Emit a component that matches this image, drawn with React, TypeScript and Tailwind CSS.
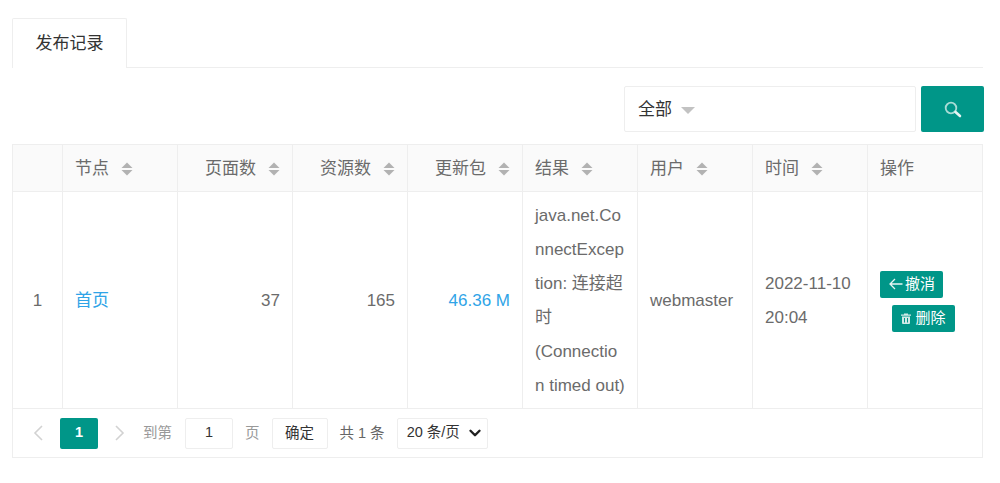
import React from 'react'
import { ChevronDown } from 'lucide-react'

const columns = [
  { name: '', width: 'w-[50px]', right: false, sort: false },
  { name: '节点', width: 'w-[115px]', right: false, sort: true },
  { name: '页面数', width: 'w-[115px]', right: true, sort: true },
  { name: '资源数', width: 'w-[115px]', right: true, sort: true },
  { name: '更新包', width: 'w-[115px]', right: true, sort: true },
  { name: '结果', width: 'w-[115px]', right: false, sort: true },
  { name: '用户', width: 'w-[115px]', right: false, sort: true },
  { name: '时间', width: 'w-[115px]', right: false, sort: true },
  { name: '操作', width: 'flex-1', right: false, sort: false },
]

const SortIcon: React.FC = () => (
  <svg width="12" height="14" viewBox="0 0 12 14" className="inline-block ml-[12px] shrink-0">
    <path d="M6 0.5 L11.5 6 L0.5 6 Z" fill="#b2b2b2" />
    <path d="M0.5 8 L11.5 8 L6 13.5 Z" fill="#b2b2b2" />
  </svg>
)

const Cell: React.FC<{ className?: string; children?: React.ReactNode }> = ({ className = '', children }) => (
  <div className={`border-r border-[#eeeeee] last:border-r-0 px-[12px] pt-[2px] flex items-center ${className}`}>
    {children}
  </div>
)

const App: React.FC = () => {
  return (
    <div className="w-[1000px] h-[483px] bg-white overflow-hidden pt-[18px] px-[12px] text-[17px] text-[#6b6b6b] font-['Liberation_Sans','Noto_Sans_CJK_SC',sans-serif]">
      <div className="w-[971px] h-[50px] border-b border-[#eeeeee]">
        <div className="w-[115px] h-[50px] bg-white border border-b-0 border-[#eeeeee] rounded-t-[2px] flex items-center justify-center text-[#333333]">
          发布记录
        </div>
      </div>

      <div className="w-[972px] mt-[18px] flex justify-end gap-[5px]">
        <div className="w-[292px] h-[46px] pt-[2px] border border-[#eeeeee] rounded-[2px] flex items-center pl-[13px] text-[#333333]">
          全部
          <svg width="14" height="7" viewBox="0 0 14 7" className="ml-[9px]">
            <path d="M0 0 L14 0 L7 7 Z" fill="#c2c2c2" />
          </svg>
        </div>
        <button className="w-[63px] h-[46px] bg-[#009688] rounded-[2px] flex items-center justify-center">
          <svg width="18" height="17" viewBox="0 0 18 17" fill="none">
            <circle cx="7" cy="7" r="5.3" stroke="#a8dcd6" strokeWidth="1.8" />
            <path d="M11.5 11 L16 15" stroke="#e6f5f3" strokeWidth="2.6" strokeLinecap="round" />
          </svg>
        </button>
      </div>

      <div className="w-[971px] mt-[12px] border border-[#eeeeee]">
        <div className="flex h-[47px] bg-[#fafafa] border-b border-[#eeeeee]">
          {columns.map((col) => (
            <Cell key={col.name || 'index'} className={`${col.width} ${col.right ? 'justify-end' : ''}`}>
              <span>{col.name}</span>
              {col.sort && <SortIcon />}
            </Cell>
          ))}
        </div>

        <div className="flex h-[217px] border-b border-[#eeeeee]">
          <Cell className="w-[50px] justify-center">1</Cell>
          <Cell className="w-[115px] text-[#2fa4e7]">首页</Cell>
          <Cell className="w-[115px] justify-end">37</Cell>
          <Cell className="w-[115px] justify-end">165</Cell>
          <Cell className="w-[115px] justify-end text-[#2fa4e7]">46.36 M</Cell>
          <Cell className="w-[115px]">
            <div className="leading-[34px] whitespace-nowrap">
              java.net.Co<br />
              nnectExcep<br />
              tion: 连接超<br />
              时<br />
              (Connectio<br />
              n timed out)
            </div>
          </Cell>
          <Cell className="w-[115px]">webmaster</Cell>
          <Cell className="w-[115px]">
            <div className="leading-[34px]">2022-11-10 20:04</div>
          </Cell>
          <Cell className="flex-1">
            <div className="flex flex-col gap-[7px]">
              <button className="w-[63px] h-[27px] bg-[#009688] rounded-[2px] text-white text-[15px] flex items-center justify-center gap-[2px]">
                <svg width="15" height="14" viewBox="0 0 15 14" fill="none" stroke="#e6f5f3" strokeWidth="1.3">
                  <path d="M7 2 L2 7 L7 12 M2 7 H14.5" />
                </svg>
                撤消
              </button>
              <button className="w-[63px] h-[27px] ml-[12px] bg-[#009688] rounded-[2px] text-white text-[15px] flex items-center justify-center gap-[4px]">
                <svg width="10" height="11" viewBox="0 0 10 11" fill="#cfeae7">
                  <path d="M0 1.5 H3 V0.5 H7 V1.5 H10 V2.8 H0 Z" />
                  <path d="M1 3.6 H9 V10 Q9 11 8 11 H2 Q1 11 1 10 Z M3 5 V9.5 H4 V5 Z M6 5 V9.5 H7 V5 Z" fillRule="evenodd" />
                </svg>
                删除
              </button>
            </div>
          </Cell>
        </div>

        <div className="h-[48px] flex items-center text-[14.5px]">
          <svg width="10" height="16" viewBox="0 0 10 16" fill="none" stroke="#d2d2d2" strokeWidth="1.6" className="ml-[20px]">
            <path d="M9 1 L2 8 L9 15" />
          </svg>
          <div className="ml-[17px] w-[38px] h-[31px] bg-[#009688] rounded-[2px] text-white font-bold flex items-center justify-center">1</div>
          <svg width="10" height="16" viewBox="0 0 10 16" fill="none" stroke="#d2d2d2" strokeWidth="1.6" className="ml-[17px]">
            <path d="M1 1 L8 8 L1 15" />
          </svg>
          <span className="ml-[18px] pt-[2px] text-[#999999]">到第</span>
          <div className="ml-[13px] w-[48px] h-[31px] border border-[#eeeeee] rounded-[2px] flex items-center justify-center text-[#333333]">1</div>
          <span className="ml-[12px] pt-[2px] text-[#999999]">页</span>
          <div className="ml-[12px] w-[56px] h-[31px] pt-[2px] border border-[#eeeeee] rounded-[2px] flex items-center justify-center text-[#333333]">确定</div>
          <span className="ml-[12px] pt-[2px] text-[#666666]">共 1 条</span>
          <div className="ml-[12px] w-[91px] h-[31px] border border-[#eeeeee] rounded-[2px] flex items-center pl-[9px] text-[#333333]">
            20 条/页
            <ChevronDown size={18} strokeWidth={3.2} className="ml-[6px] text-[#222222]" />
          </div>
        </div>
      </div>
    </div>
  )
}

export default App
